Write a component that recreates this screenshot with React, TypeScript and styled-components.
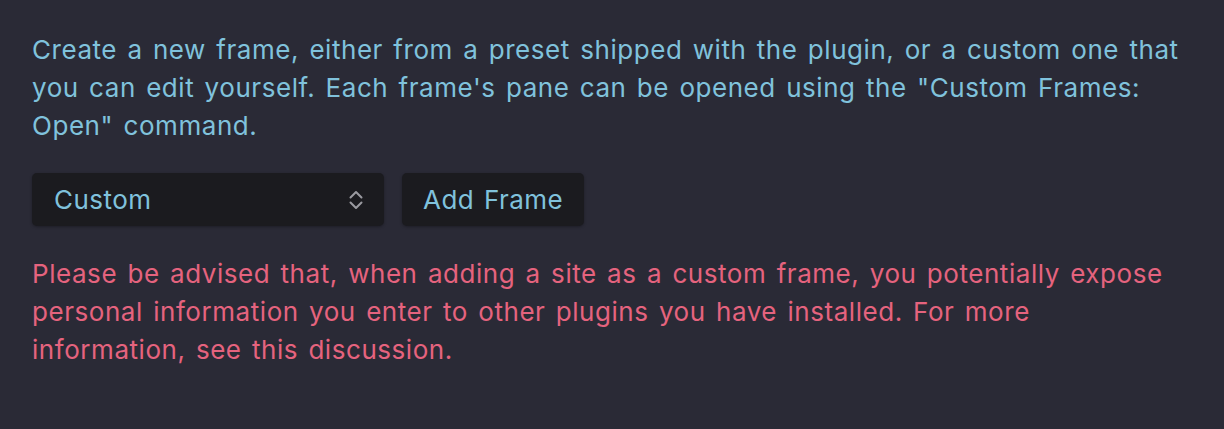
import React from "react";
import styled, {createGlobalStyle} from "styled-components";

const GlobalStyle = createGlobalStyle`
  html, body {
    margin: 0;
    background: #2a2a36;
  }
  body {
    font-family: Inter, "Liberation Sans", sans-serif;
  }
`

const Page = styled.div`
  box-sizing: border-box;
  width: 1224px;
  height: 429px;
  padding: 31px 32px;
  background: #2a2a36;
`
const Text = styled.p<{tone: 'info' | 'warn'}>`
  margin: 0;
  font-size: 26px;
  line-height: 38px;
  letter-spacing: 0.55px;
  word-spacing: 2.5px;
  white-space: nowrap;
  color: ${p => p.tone === 'warn' ? '#e5637e' : '#80c2dc'};
`
const Controls = styled.div`
  display: flex;
  gap: 18px;
  margin: 28px 0 29px;
`
const SelectBox = styled.div`
  display: flex;
  align-items: center;
  justify-content: space-between;
  box-sizing: border-box;
  width: 352px;
  height: 53px;
  padding: 0 20px 0 22px;
  background: #1b1b1f;
  border-radius: 5px;
  box-shadow: 0 1px 3px rgba(0, 0, 0, 0.3);
  color: #80c2dc;
  font-size: 26px;
  letter-spacing: 0.45px;
`
const Button = styled.button`
  box-sizing: border-box;
  height: 53px;
  padding: 0 21px;
  background: #1b1b1f;
  border: none;
  border-radius: 5px;
  box-shadow: 0 1px 3px rgba(0, 0, 0, 0.3);
  color: #80c2dc;
  font-family: inherit;
  font-size: 26px;
  letter-spacing: 0.45px;
  word-spacing: 2px;
`

function Chevrons() {
    return (
        <svg width="16" height="22" viewBox="0 0 16 22" fill="none" stroke="#9a9aa0" strokeWidth="2" strokeLinecap="round" strokeLinejoin="round">
            <path d="M2.5 8.5 L8 3 L13.5 8.5"/>
            <path d="M2.5 13.5 L8 19 L13.5 13.5"/>
        </svg>
    )
}

export default function App() {
    return (
        <Page>
            <GlobalStyle/>
            <Text tone="info">
                Create a new frame, either from a preset shipped with the plugin, or a custom one that<br/>
                you can edit yourself. Each frame's pane can be opened using the "Custom Frames:<br/>
                Open" command.
            </Text>
            <Controls>
                <SelectBox>
                    <span>Custom</span>
                    <Chevrons/>
                </SelectBox>
                <Button>Add Frame</Button>
            </Controls>
            <Text tone="warn">
                Please be advised that, when adding a site as a custom frame, you potentially expose<br/>
                personal information you enter to other plugins you have installed. For more<br/>
                information, see this discussion.
            </Text>
        </Page>
    );
}
